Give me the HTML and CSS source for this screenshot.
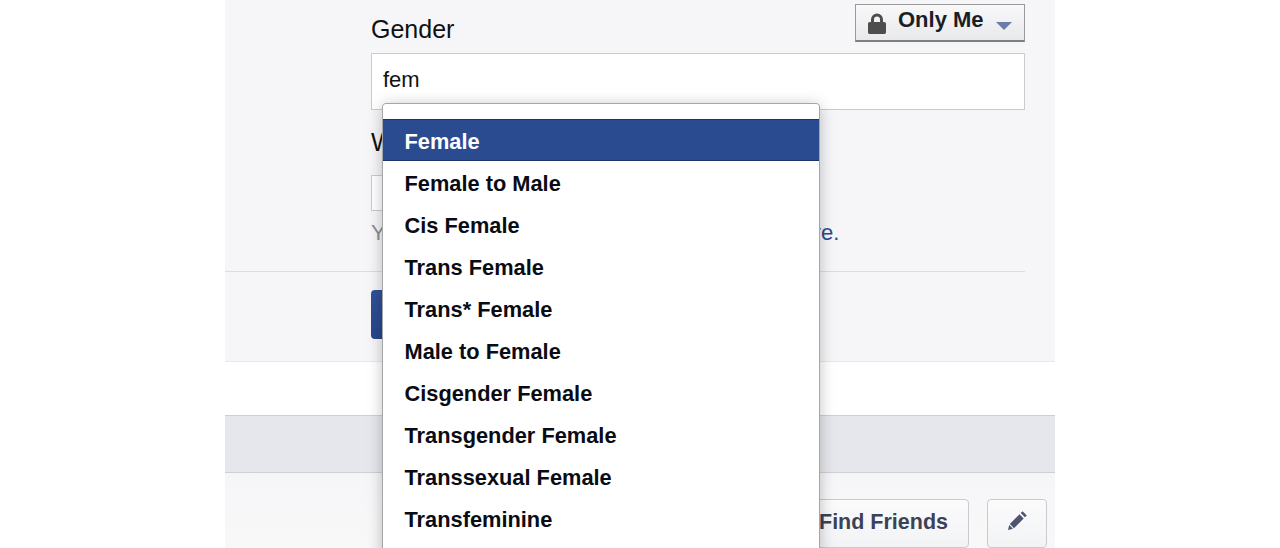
FILE: index.html
```html
<!DOCTYPE html>
<html lang="en">
<head>
<meta charset="utf-8">
<title>Gender settings</title>
<link rel="stylesheet" href="styles.css">
</head>
<body>
<main class="column">
  <section class="settings">
    <div class="form-upper">
      <div class="label-row">
        <label class="label">Gender</label>
        <button class="privacy">
          <svg class="lock" viewBox="0 0 18 21" aria-hidden="true"><path d="M3 9V6.500a6 6 0 0 1 12 0V9h1.200c1 0 1.800.8 1.800 1.800v8.400c0 1-.8 1.800-1.800 1.800H1.800C.8 21 0 20.200 0 19.200v-8.400C0 9.800.8 9 1.800 9zm3 0h6V6.500a3 3 0 0 0-6 0z"/></svg>
          <span class="privacy-text">Only Me</span>
          <i class="caret"></i>
        </button>
      </div>
      <div class="input">fem</div>
      <div class="label pronoun-label">What pronoun do you prefer?</div>
      <div class="input-small"></div>
      <p class="hint">Your pronoun will always be public. <a href="#">Learn more.</a></p>
    </div>
    <div class="divider"></div>
    <div class="form-lower"><button class="save">Save</button></div>
  </section>
  <div class="gap"></div>
  <div class="band"></div>
  <div class="actions">
    <button class="action find">Find Friends</button>
    <button class="action edit" aria-label="Edit">
      <svg viewBox="0 0 20 20" aria-hidden="true"><path d="M14.600 1.200l4.200 4.200-1.900 1.900-4.200-4.200zM11.500 4.300l4.200 4.200L6 18.200l-4.200-4.200zM1.200 15l3.800 3.800L0 20z"/></svg>
    </button>
  </div>
</main>
<ul class="menu">
  <li class="selected">Female</li>
  <li>Female to Male</li>
  <li>Cis Female</li>
  <li>Trans Female</li>
  <li>Trans* Female</li>
  <li>Male to Female</li>
  <li>Cisgender Female</li>
  <li>Transgender Female</li>
  <li>Transsexual Female</li>
  <li>Transfeminine</li>
</ul>
</body>
</html>
```
FILE: styles.css
```css
html, body {
  margin: 0;
  height: 548px;
  overflow: hidden;
  background: #fff;
  font-family: "Liberation Sans", Arial, sans-serif;
  color: #111;
}
button { font-family: inherit; }
.column { width: 830px; margin-left: 225px; }
.settings {
  height: 361px;
  background: #f6f6f8;
  border-bottom: 1px solid #e8e8ea;
  display: flex;
  flex-direction: column;
}
.form-upper { padding-left: 146px; width: 654px; height: 271px; }
.label-row {
  height: 53px;
  display: flex;
  justify-content: space-between;
  align-items: flex-start;
}
.label { font-size: 25px; line-height: 30px; }
.label-row .label { margin-top: 14px; }
.privacy {
  margin: 4px 0 0;
  box-sizing: border-box;
  width: 170px;
  height: 38px;
  padding: 0 13px 0 12px;
  display: flex;
  align-items: center;
  border: 1px solid #9a9a9a;
  border-bottom: 2px solid #7f7f7f;
  background: linear-gradient(#f8f8f9, #e8e9eb);
  font-size: 22px;
  font-weight: 700;
  color: #1c1e26;
}
.lock { flex: none; width: 18px; height: 21px; fill: #4d4d4d; margin-top: 2px; }
.privacy-text { flex: none; white-space: nowrap; margin-left: 12px; margin-top: -5px; }
.caret {
  flex: none;
  margin-left: 12px;
  margin-top: 6px;
  width: 0;
  height: 0;
  border-left: 8px solid transparent;
  border-right: 8px solid transparent;
  border-top: 8px solid #6c7caa;
}
.input {
  box-sizing: border-box;
  height: 57px;
  padding: 12px 11px 0;
  background: #fff;
  border: 1px solid #ccc;
  font-size: 22px;
  line-height: 28px;
  color: #111;
}
.pronoun-label { margin-top: 17px; }
.input-small {
  box-sizing: border-box;
  width: 300px;
  height: 36px;
  margin-top: 18px;
  background: #fff;
  border: 1px solid #ccc;
}
.hint {
  margin: 9px 0 0;
  font-size: 22.100px;
  line-height: 26px;
  color: #8a8f99;
  white-space: nowrap;
}
.hint a { color: #2b4b90; text-decoration: none; }
.divider { width: 800px; height: 1px; background: #dcdde0; }
.form-lower { padding: 18px 0 0 146px; }
.save {
  width: 150px;
  height: 49px;
  border: 0;
  border-radius: 4px;
  background: linear-gradient(#2f5198, #27468a);
  color: #fff;
  font-size: 22px;
  font-weight: 700;
}
.gap { height: 53px; }
.band {
  box-sizing: border-box;
  height: 58px;
  background: #e6e7ec;
  border-top: 1px solid #cfd0d4;
  border-bottom: 1px solid #cfd0d4;
}
.actions {
  height: 75px;
  background: linear-gradient(#f6f6f8, #f8f8f9);
  display: flex;
  justify-content: flex-end;
  align-items: flex-start;
  gap: 18px;
  padding: 26px 8px 0 0;
  box-sizing: border-box;
}
.action {
  box-sizing: border-box;
  height: 49px;
  border: 1px solid #c9cbd0;
  border-radius: 4px;
  background: linear-gradient(#fbfbfc, #f2f3f5);
  color: #3c4256;
  font-size: 21.500px;
  font-weight: 700;
  padding: 0 0 3px;
}
.find { width: 200px; text-align: right; padding-right: 20px; }
.edit { width: 60px; display: flex; align-items: center; justify-content: center; padding: 0 0 7px 1px; }
.edit svg { width: 20px; height: 20px; fill: #4f5570; }
.menu {
  position: absolute;
  left: 383px;
  top: 104px;
  box-sizing: border-box;
  width: 436px;
  height: 480px;
  margin: 0;
  padding: 15px 0 0;
  list-style: none;
  background: #fff;
  border-radius: 3px;
  box-shadow: -1px 0 0 #a5a6aa, 1px 0 0 #a5a6aa, 0 -1px 0 #a5a6aa, 0 2px 16px rgba(0, 0, 0, .28);
}
.menu li {
  box-sizing: border-box;
  height: 42px;
  padding: 2px 0 0 21.500px;
  font-size: 21.800px;
  font-weight: 700;
  line-height: 42px;
  color: #0a0c14;
}
.menu .selected {
  background: #2b4b90;
  border-top: 1px solid #1c3468;
  border-bottom: 1px solid #1c3468;
  line-height: 40px;
  color: #fff;
}
```
